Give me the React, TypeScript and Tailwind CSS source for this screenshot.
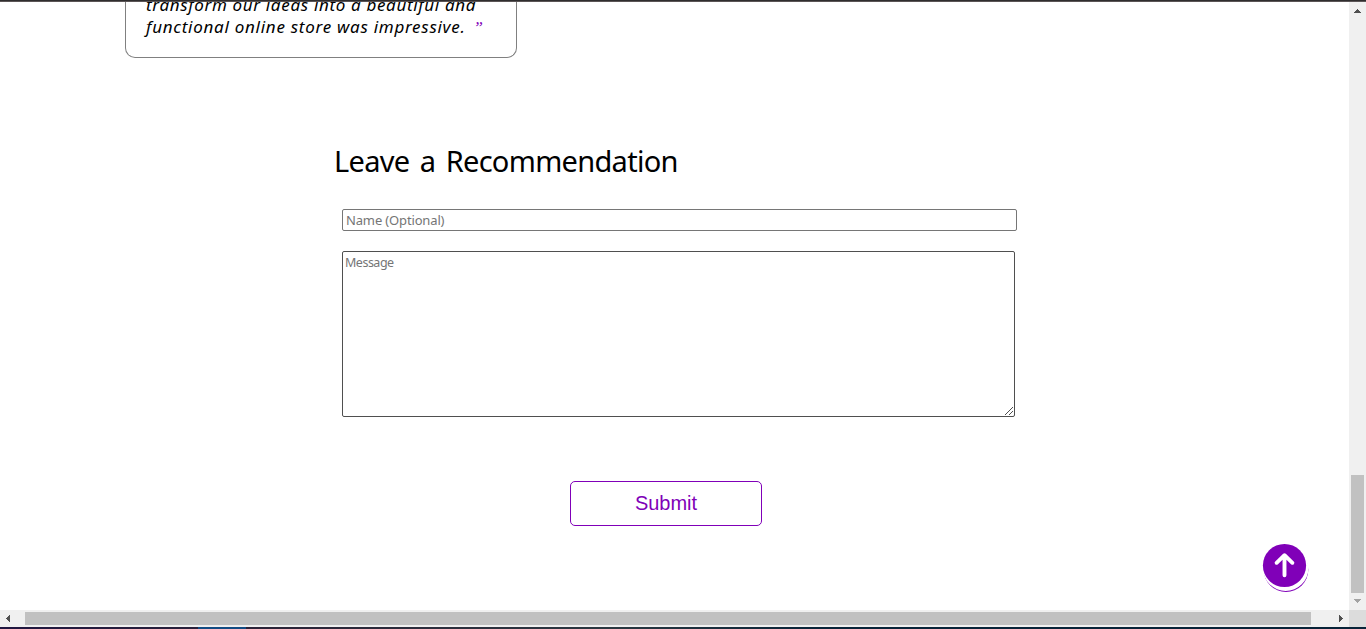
function Testimonial() {
  return (
    <div className="ml-[125px] h-14 w-[392px] overflow-hidden rounded-b-[10px] border border-t-0 border-[#808080] pl-[20px]">
      <p className="-mt-[8px] whitespace-nowrap font-['Noto_Sans',sans-serif] text-[17px] italic leading-[22px] text-black">
        <span className="block tracking-[0.66px]">transform our ideas into a beautiful and</span>
        <span className="tracking-[0.73px]">functional online store was impressive.</span>
        <span className="ml-[8px] font-['Liberation_Serif',serif] text-[#8000b8]">”</span>
      </p>
    </div>
  );
}

function ScrollTopButton() {
  return (
    <button aria-label="Back to top" className="absolute left-[1260px] top-[540px] h-[54px] w-[52px]">
      <svg width="52" height="54" viewBox="0 0 52 54">
        <circle cx="26" cy="29.7" r="22.3" fill="#8000b8" />
        <circle cx="25.7" cy="28.2" r="22.7" fill="#fff" />
        <circle cx="24.5" cy="25.5" r="21.6" fill="#8000b8" />
        <path d="M24.5 35.2V15.5M16.6 22.8L24.5 15.2L32.4 22.8" fill="none" stroke="#fff" strokeWidth="3.9" strokeLinecap="round" strokeLinejoin="round" />
      </svg>
    </button>
  );
}

export default function App() {
  return (
    <div className="relative h-[629px] w-[1366px] overflow-hidden bg-white">
      <div className="h-[2px] border-b border-[#5b5556] bg-[#2f2d2e]" />
      <div className="flex h-[608px]">
        <main className="w-[1349px]">
          <Testimonial />
          <form className="ml-[334px] pt-[82px]" onSubmit={(e) => e.preventDefault()}>
            <h2 className="whitespace-nowrap font-['Noto_Sans',sans-serif] text-[29px] leading-[42px] tracking-[-0.7px] [word-spacing:3.5px] text-black">Leave a Recommendation</h2>
            <input
              placeholder="Name (Optional)"
              className="ml-[8px] mt-[27px] block h-[22px] w-[675px] rounded-[2px] border border-[#767676] px-[3px] font-['Noto_Sans',sans-serif] text-[13px] tracking-[-0.15px] placeholder:text-[#757575]"
            />
            <div className="relative ml-[8px] mt-[20px] h-[166px] w-[673px]">
              <textarea
                placeholder="Message"
                className="block h-[166px] w-[673px] resize-none rounded-[2px] border border-[#4f4f4f] px-[2px] py-[2px] font-['Noto_Sans',sans-serif] text-[12.5px] leading-[18px] tracking-[-0.5px] placeholder:text-[#757575]"
              />
              <svg className="absolute bottom-px right-[2px]" width="9" height="9" viewBox="0 0 9 9" shapeRendering="crispEdges">
                <path d="M0.5 8.5L8.5 0.5M4.5 8.5L8.5 4.5" stroke="#4f4f4f" />
              </svg>
            </div>
            <button className="ml-[236px] mt-[64px] block h-[45px] w-[192px] rounded-[5px] border border-[#8000b8] pb-[2px] font-['Liberation_Sans',sans-serif] text-[20px] text-[#8000b8]">
              Submit
            </button>
          </form>
        </main>
        <div className="flex w-[17px] flex-col items-center bg-[#f0f0f0]">
          <svg width="17" height="17" viewBox="0 0 17 17" shapeRendering="crispEdges">
            <path d="M5 11H12L8.5 7Z" fill="#505050" />
          </svg>
          <div className="mt-[456px] h-[118px] w-[13px] bg-[#c1c1c1]" />
          <svg width="17" height="17" viewBox="0 0 17 17" shapeRendering="crispEdges">
            <path d="M5 6H12L8.5 10Z" fill="#a3a3a3" />
          </svg>
        </div>
      </div>
      <div className="flex h-[17px] items-center bg-[#f0f0f0]">
        <svg width="17" height="17" viewBox="0 0 17 17" shapeRendering="crispEdges">
          <path d="M10 5V12L6 8.5Z" fill="#505050" />
        </svg>
        <div className="ml-[8px] h-[13px] w-[1286px] bg-[#c1c1c1]" />
        <svg className="ml-[21px]" width="17" height="17" viewBox="0 0 17 17" shapeRendering="crispEdges">
          <path d="M7 5V12L11 8.5Z" fill="#505050" />
        </svg>
        <div className="ml-auto h-[17px] w-[17px] bg-[#dcdcdc]" />
      </div>
      <div className="flex h-[2px] bg-[linear-gradient(90deg,#201640_0%,#2c2438_20%,#2a3740_45%,#082338_60%)]">
        <div className="ml-[198px] w-[48px] bg-[#124b83]" />
      </div>
      <ScrollTopButton />
    </div>
  );
}
